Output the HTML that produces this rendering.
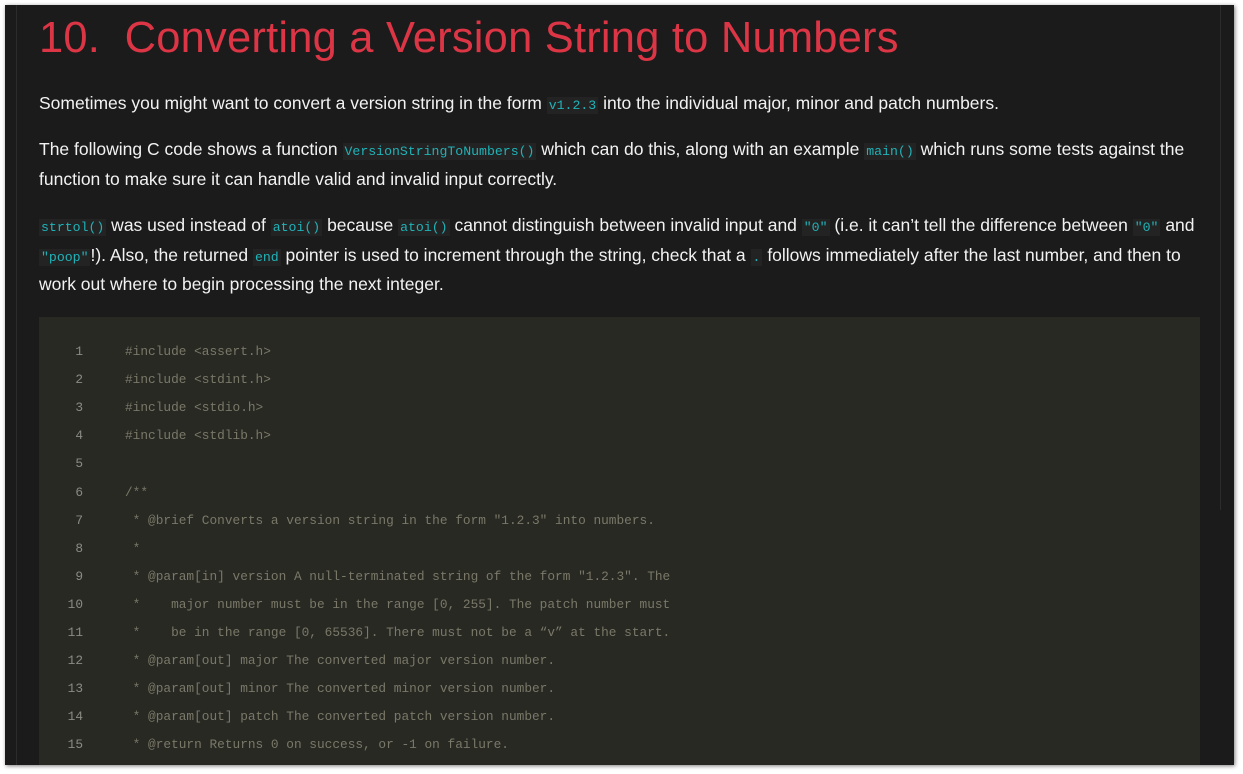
<!DOCTYPE html><html><head><style>
body{margin:0;background:#fff;width:1243px;height:774px;overflow:hidden;font-family:"Liberation Sans",Arial,sans-serif}
.panel{position:absolute;left:5px;top:5px;width:1229px;height:760px;background:#1b1b1b;box-shadow:1px 1px 4px rgba(0,0,0,.5);overflow:hidden}
.vl{position:absolute;left:11px;top:0;width:1px;height:760px;background:#2c2c2c}
.vr{position:absolute;left:1215px;top:0;width:1px;height:505px;background:#2c2c2c}
h1{position:absolute;left:34px;top:9px;margin:0;font-weight:normal;font-size:43.5px;color:#dc3545;white-space:nowrap;letter-spacing:0.2px}
.p{position:absolute;left:34px;width:1168px;font-size:17.5px;line-height:29.5px;color:#f2f2f2;margin:0;letter-spacing:0}
code{font-family:"Liberation Mono",monospace;font-size:13.2px;line-height:10px;color:#1fb3b8;background:#232323;padding:1px 2px;letter-spacing:0}
.code{position:absolute;left:34px;top:312px;width:1161px;height:460px;background:#282923;font-family:"Liberation Mono",monospace;font-size:12.8px;color:#7a7868}
.ln{position:absolute;left:0;width:44px;text-align:right;color:#8a8c84}
.tx{position:absolute;left:86px;white-space:pre}
</style></head><body><div class="panel"><div class="vl"></div><div class="vr"></div>
<h1>10.&nbsp; Converting a Version String to Numbers</h1>
<p class="p" style="top:84px">Sometimes you might want to convert a version string in the form <code>v1.2.3</code> into the individual major, minor and patch numbers.</p>
<p class="p" style="top:130px">The following C code shows a function <code>VersionStringToNumbers()</code> which can do this, along with an example <code>main()</code> which runs some tests against the function to make sure it can handle valid and invalid input correctly.</p>
<p class="p" style="top:206px"><code>strtol()</code> was used instead of <code>atoi()</code> because <code>atoi()</code> cannot distinguish between invalid input and <code>"0"</code> (i.e. it can’t tell the difference between <code>"0"</code> and <code>"poop"</code>!). Also, the returned <code>end</code> pointer is used to increment through the string, check that a <code>.</code> follows immediately after the last number, and then to work out where to begin processing the next integer.</p>
<div class="code">
<div class="ln" style="top:27px">1</div><div class="tx" style="top:27px">#include &lt;assert.h&gt;</div>
<div class="ln" style="top:55px">2</div><div class="tx" style="top:55px">#include &lt;stdint.h&gt;</div>
<div class="ln" style="top:83px">3</div><div class="tx" style="top:83px">#include &lt;stdio.h&gt;</div>
<div class="ln" style="top:111px">4</div><div class="tx" style="top:111px">#include &lt;stdlib.h&gt;</div>
<div class="ln" style="top:139px">5</div>
<div class="ln" style="top:168px">6</div><div class="tx" style="top:168px">/**</div>
<div class="ln" style="top:196px">7</div><div class="tx" style="top:196px"> * @brief Converts a version string in the form "1.2.3" into numbers.</div>
<div class="ln" style="top:224px">8</div><div class="tx" style="top:224px"> *</div>
<div class="ln" style="top:252px">9</div><div class="tx" style="top:252px"> * @param[in] version A null-terminated string of the form "1.2.3". The</div>
<div class="ln" style="top:280px">10</div><div class="tx" style="top:280px"> *    major number must be in the range [0, 255]. The patch number must</div>
<div class="ln" style="top:308px">11</div><div class="tx" style="top:308px"> *    be in the range [0, 65536]. There must not be a “v” at the start.</div>
<div class="ln" style="top:336px">12</div><div class="tx" style="top:336px"> * @param[out] major The converted major version number.</div>
<div class="ln" style="top:364px">13</div><div class="tx" style="top:364px"> * @param[out] minor The converted minor version number.</div>
<div class="ln" style="top:392px">14</div><div class="tx" style="top:392px"> * @param[out] patch The converted patch version number.</div>
<div class="ln" style="top:420px">15</div><div class="tx" style="top:420px"> * @return Returns 0 on success, or -1 on failure.</div>
</div></div></body></html>
